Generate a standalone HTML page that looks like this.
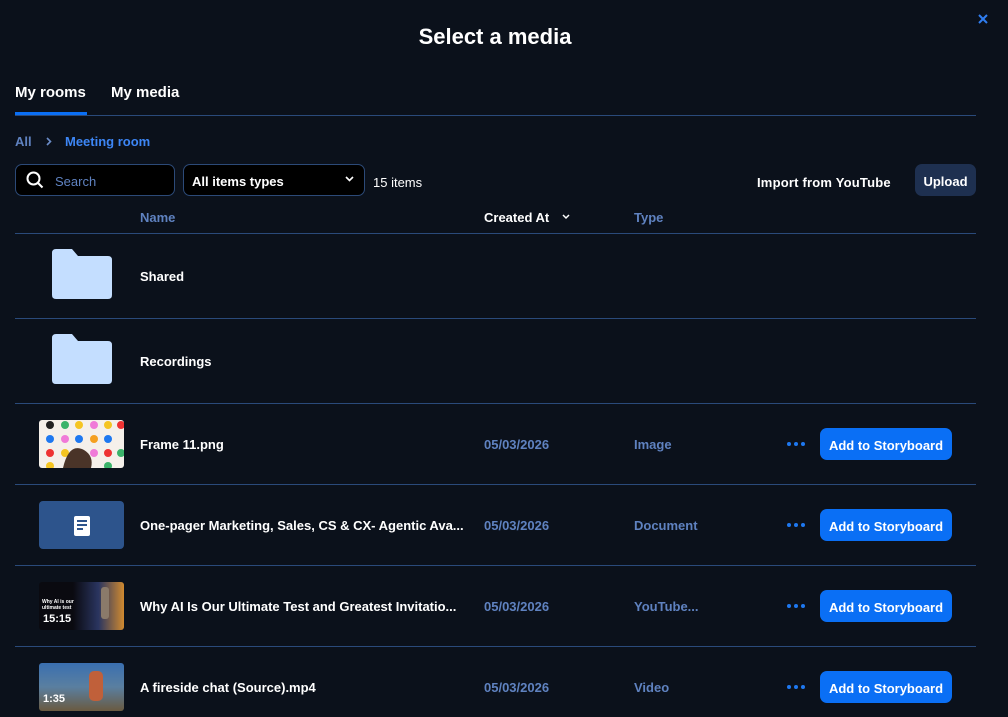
<!DOCTYPE html>
<html><head><meta charset="utf-8"><style>
*{margin:0;padding:0;box-sizing:border-box}
body{width:1008px;height:717px;background:#0b111b;font-family:"Liberation Sans",sans-serif;color:#fff;position:relative;overflow:hidden;font-weight:bold}
.a{position:absolute;white-space:nowrap}
.t13{font-size:13px}
.line{position:absolute;left:15px;width:961px;height:1px;background:#2a4a7a}
.dim{color:#5f82c0}
.btn{position:absolute;left:820px;width:132px;height:32px;background:#0a6ff5;border-radius:7px;font-size:13px;display:flex;align-items:center;justify-content:center;padding-top:2px}
.dots{position:absolute;left:787px;width:18px;height:4px}
.dots i{position:absolute;top:0;width:4px;height:4px;border-radius:2px;background:#1e78f0}
.thumb{position:absolute;left:39px;width:85px;height:48px;border-radius:3px;overflow:hidden}
</style></head><body>
<div class="a" style="left:0;width:990px;text-align:center;top:24px;font-size:22px">Select a media</div>
<svg class="a" style="left:977px;top:13px" width="12" height="12" viewBox="0 0 12 12"><path d="M2 2L10 10M10 2L2 10" stroke="#2f7df0" stroke-width="2"/></svg>
<div class="a" style="left:15px;top:84px;font-size:15px">My rooms</div>
<div class="a" style="left:111px;top:84px;font-size:15px">My media</div>
<div class="a" style="left:15px;top:112px;width:72px;height:3px;background:#0a6ff5"></div>
<div class="line" style="top:115px"></div>
<div class="a t13 dim" style="left:15px;top:134px">All</div>
<svg class="a" style="left:45px;top:137px" width="8" height="9" viewBox="0 0 8 9"><path d="M2 1L5.5 4.5L2 8" stroke="#6b8cc7" stroke-width="1.6" fill="none"/></svg>
<div class="a t13" style="left:65px;top:134px;color:#3d86f5">Meeting room</div>
<div class="a" style="left:15px;top:164px;width:160px;height:32px;border:1px solid #2c4a78;border-radius:7px;background:#000"></div>
<svg class="a" style="left:26px;top:171px" width="18" height="18" viewBox="0 0 18 18"><circle cx="7.5" cy="7.5" r="6" stroke="#fff" stroke-width="2" fill="none"/><path d="M12 12L16.5 16.5" stroke="#fff" stroke-width="2"/></svg>
<div class="a t13" style="left:55px;top:174px;color:#5f82c0;font-weight:normal">Search</div>
<div class="a" style="left:183px;top:164px;width:182px;height:32px;border:1px solid #2c4a78;border-radius:7px;background:#000"></div>
<div class="a t13" style="left:192px;top:174px">All items types</div>
<svg class="a" style="left:345px;top:176px" width="9" height="6" viewBox="0 0 9 6"><path d="M1 1L4.5 4.5L8 1" stroke="#fff" stroke-width="1.6" fill="none"/></svg>
<div class="a t13" style="left:373px;top:175px;font-weight:normal">15 items</div>
<div class="a t13" style="left:757px;top:175px;letter-spacing:0.2px">Import from YouTube</div>
<div class="a t13" style="left:915px;top:164px;width:61px;height:32px;background:#1e3050;border-radius:7px;display:flex;align-items:center;justify-content:center;padding-top:2px">Upload</div>
<div class="a t13 dim" style="left:140px;top:210px">Name</div>
<div class="a t13" style="left:484px;top:210px">Created At</div>
<svg class="a" style="left:562px;top:214px" width="8" height="6" viewBox="0 0 8 6"><path d="M1 1L4 4L7 1" stroke="#fff" stroke-width="1.5" fill="none"/></svg>
<div class="a t13 dim" style="left:634px;top:210px">Type</div>
<div class="line" style="top:233px"></div>
<svg class="a" style="left:52px;top:249px" width="60" height="50" viewBox="0 0 60 50"><path d="M0 4Q0 0 4 0H20L26 7H56Q60 7 60 11V46Q60 50 56 50H4Q0 50 0 46Z" fill="#c4deff"/></svg>
<div class="a t13" style="left:140px;top:269px">Shared</div>
<div class="line" style="top:318px"></div>
<svg class="a" style="left:52px;top:334px" width="60" height="50" viewBox="0 0 60 50"><path d="M0 4Q0 0 4 0H20L26 7H56Q60 7 60 11V46Q60 50 56 50H4Q0 50 0 46Z" fill="#c4deff"/></svg>
<div class="a t13" style="left:140px;top:354px">Recordings</div>
<div class="line" style="top:403px"></div>
<div class="thumb" style="top:420px;background:#f5f0ea">
<svg width="85" height="48" viewBox="0 0 85 48"><g>
<circle cx="11" cy="5" r="4" fill="#222"/><circle cx="26" cy="5" r="4" fill="#3bb36a"/><circle cx="40" cy="5" r="4" fill="#f5c522"/><circle cx="55" cy="5" r="4" fill="#f07ad8"/><circle cx="69" cy="5" r="4" fill="#f5c522"/><circle cx="82" cy="5" r="4" fill="#e33"/>
<circle cx="11" cy="19" r="4" fill="#1e78f0"/><circle cx="26" cy="19" r="4" fill="#f07ad8"/><circle cx="40" cy="19" r="4" fill="#1e78f0"/><circle cx="55" cy="19" r="4" fill="#f5a020"/><circle cx="69" cy="19" r="4" fill="#1e78f0"/>
<circle cx="11" cy="33" r="4" fill="#e33"/><circle cx="26" cy="33" r="4" fill="#f5c522"/><circle cx="55" cy="33" r="4" fill="#f07ad8"/><circle cx="69" cy="33" r="4" fill="#e33"/><circle cx="82" cy="33" r="4" fill="#3bb36a"/>
<circle cx="11" cy="46" r="4" fill="#f5c522"/><circle cx="69" cy="46" r="4" fill="#3bb36a"/>
<path d="M24 48Q30 22 45 30Q55 36 52 48Z" fill="#4a3428"/></g></svg></div>
<div class="a t13" style="left:140px;top:437px">Frame 11.png</div>
<div class="a t13 dim" style="left:484px;top:437px">05/03/2026</div>
<div class="a t13 dim" style="left:634px;top:437px">Image</div>
<div class="dots" style="top:442px"><i style="left:0"></i><i style="left:7px"></i><i style="left:14px"></i></div>
<div class="btn" style="top:428px">Add to Storyboard</div>
<div class="line" style="top:484px"></div>
<div class="thumb" style="top:501px;background:#2d548c;border-radius:4px">
<svg style="position:absolute;left:35px;top:15px" width="16" height="20" viewBox="0 0 16 20"><rect width="16" height="20" rx="2" fill="#fff"/><path d="M3 5H13M3 9H13M3 13H9" stroke="#2d548c" stroke-width="2"/></svg></div>
<div class="a t13" style="left:140px;top:518px">One-pager Marketing, Sales, CS &amp; CX- Agentic Ava...</div>
<div class="a t13 dim" style="left:484px;top:518px">05/03/2026</div>
<div class="a t13 dim" style="left:634px;top:518px">Document</div>
<div class="dots" style="top:523px"><i style="left:0"></i><i style="left:7px"></i><i style="left:14px"></i></div>
<div class="btn" style="top:509px">Add to Storyboard</div>
<div class="line" style="top:565px"></div>
<div class="thumb" style="top:582px;background:linear-gradient(90deg,#0a0a10 40%,#2a3560 70%,#d08a30 100%)">
<div class="a" style="left:3px;top:17px;font-size:5px;line-height:6px">Why AI is our<br>ultimate test</div>
<div class="a" style="left:62px;top:5px;width:8px;height:32px;background:#8a7a6a;border-radius:3px"></div>
<div class="a" style="left:4px;top:31px;font-size:11px">15:15</div></div>
<div class="a t13" style="left:140px;top:599px">Why AI Is Our Ultimate Test and Greatest Invitatio...</div>
<div class="a t13 dim" style="left:484px;top:599px">05/03/2026</div>
<div class="a t13 dim" style="left:634px;top:599px">YouTube...</div>
<div class="dots" style="top:604px"><i style="left:0"></i><i style="left:7px"></i><i style="left:14px"></i></div>
<div class="btn" style="top:590px">Add to Storyboard</div>
<div class="line" style="top:646px"></div>
<div class="thumb" style="top:663px;background:linear-gradient(180deg,#3a6fb0 0%,#5a7fa0 50%,#6a5a40 100%)">
<div class="a" style="left:50px;top:8px;width:14px;height:30px;background:#c0603a;border-radius:5px"></div>
<div class="a" style="left:4px;top:30px;font-size:11px">1:35</div></div>
<div class="a t13" style="left:140px;top:680px">A fireside chat (Source).mp4</div>
<div class="a t13 dim" style="left:484px;top:680px">05/03/2026</div>
<div class="a t13 dim" style="left:634px;top:680px">Video</div>
<div class="dots" style="top:685px"><i style="left:0"></i><i style="left:7px"></i><i style="left:14px"></i></div>
<div class="btn" style="top:671px">Add to Storyboard</div>
</body></html>
